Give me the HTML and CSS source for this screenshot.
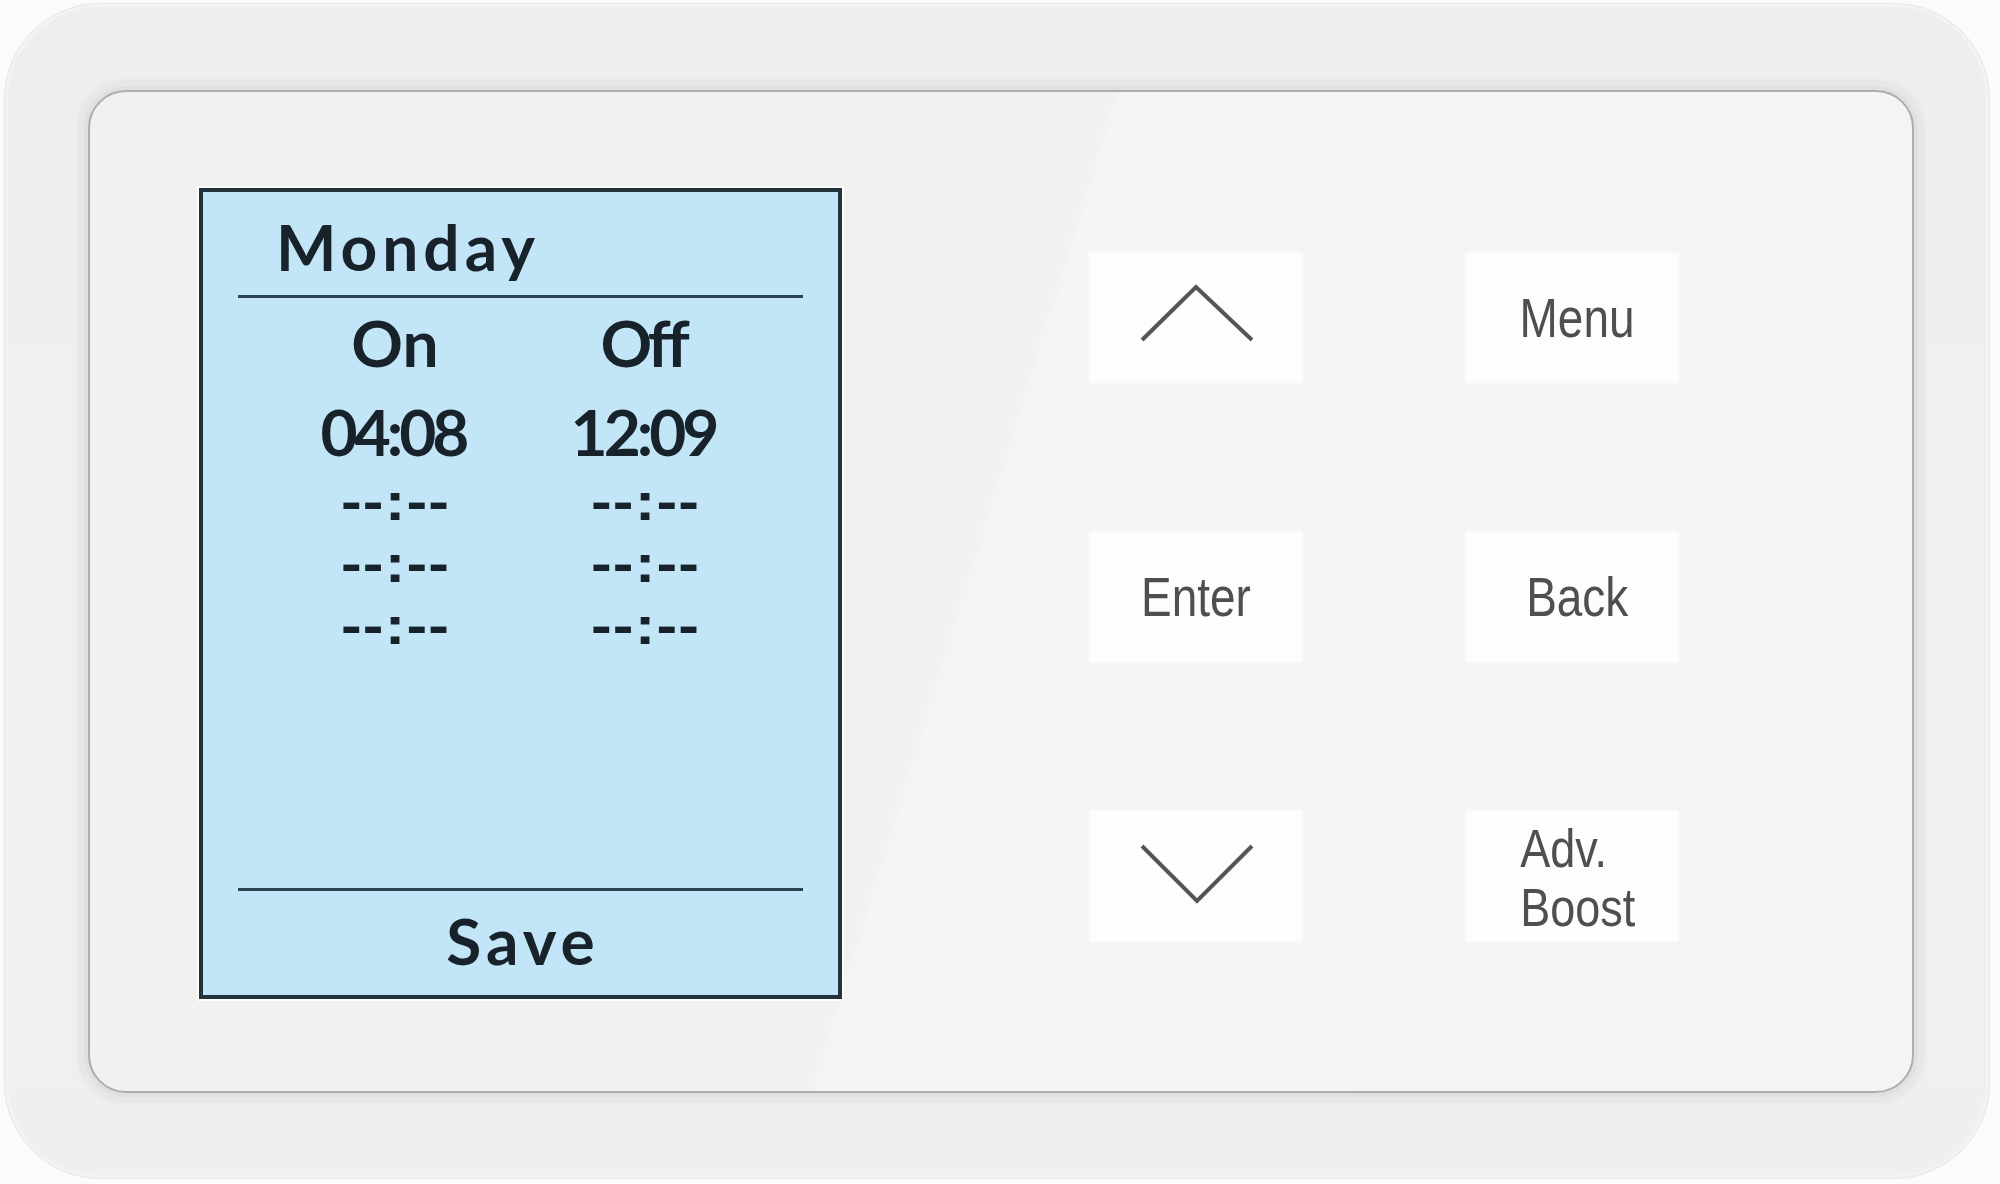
FILE: index.html
```html
<!DOCTYPE html>
<html lang="en">
<head>
<meta charset="utf-8">
<title>Thermostat controller</title>
<link rel="stylesheet" href="styles.css">
</head>
<body>
<div class="device">
  <div class="face">
    <div class="screen">
      <div class="day">Monday</div>
      <div class="rule"></div>
      <div class="schedule">
        <div class="head">On</div>
        <div class="head off">Off</div>
        <div class="time">04:08</div>
        <div class="time">12:09</div>
        <div class="blank"><span>--:--</span></div>
        <div class="blank"><span>--:--</span></div>
        <div class="blank"><span>--:--</span></div>
        <div class="blank"><span>--:--</span></div>
        <div class="blank"><span>--:--</span></div>
        <div class="blank"><span>--:--</span></div>
      </div>
      <div class="foot">
        <div class="rule"></div>
        <div class="save">Save</div>
      </div>
    </div>
    <div class="keys">
      <div class="key">
        <svg class="chev" width="213" height="130" viewBox="0 0 213 130"><polyline points="53,87 107,34 163,87"/></svg>
      </div>
      <div class="key alt"><span class="label">Menu</span></div>
      <div class="key"><span class="label">Enter</span></div>
      <div class="key alt"><span class="label">Back</span></div>
      <div class="key">
        <svg class="chev" width="213" height="130" viewBox="0 0 213 130"><polyline points="53,35 108,90 163,35"/></svg>
      </div>
      <div class="key alt boost"><span class="label two">Adv.<br>Boost</span></div>
    </div>
  </div>
</div>
</body>
</html>
```
FILE: styles.css
```css
html, body {
  margin: 0;
  padding: 0;
  background: #fbfbfb;
}

body {
  width: 2000px;
  height: 1184px;
  overflow: hidden;
}

.device {
  box-sizing: border-box;
  width: 1986px;
  height: 1176px;
  margin: 3px 0 0 4px;
  border: 1px solid #e6e6e6;
  border-radius: 96px;
  background: linear-gradient(180deg, #eeeeee 0%, #f0f0f0 50%, #efefef 100%);
  box-shadow: inset 0 0 0 3px #f3f3f3;
  padding: 86px 75px 85px 83px;
  display: flex;
}

.face {
  flex: 1;
  box-sizing: border-box;
  border: 2px solid #adadad;
  border-radius: 38px;
  background: linear-gradient(107deg, #f1f1f0 0%, #f1f1f0 48%, #f5f5f5 48.6%, #f4f4f4 100%);
  box-shadow: 0 0 0 4px #e0e0e0, 0 0 3px 11px #e7e7e7;
  padding: 96px 0 0 109px;
  display: flex;
  align-items: flex-start;
}

.screen {
  box-sizing: border-box;
  width: 643px;
  height: 811px;
  border: 4px solid #24323c;
  background: #c3e5f8;
  box-shadow: 0 0 0 2px rgba(255, 255, 255, 0.85);
  display: flex;
  flex-direction: column;
  color: #17222b;
  font-family: Lato, "DejaVu Sans", sans-serif;
  font-weight: 700;
  font-size: 64px;
}

.day {
  line-height: 80px;
  padding: 15px 0 0 73px;
  letter-spacing: 5px;
}

.rule {
  height: 3px;
  margin: 8px 35px 0 35px;
  background: #2c4555;
}

.schedule {
  display: grid;
  grid-template-columns: 200px 200px;
  column-gap: 50px;
  margin: 5px 0 0 92px;
  text-align: center;
}

.head {
  line-height: 80px;
}

.head.off {
  letter-spacing: -4px;
  text-indent: -4px;
}

.time {
  line-height: 64px;
  margin: 17px 0 6px 0;
  letter-spacing: -4px;
  text-indent: -4px;
}

.blank span {
  display: block;
  font-family: "Liberation Sans", Arial, sans-serif;
  font-weight: 700;
  font-size: 54px;
  line-height: 62px;
  letter-spacing: 1px;
  text-indent: 1px;
  text-align: center;
  transform: scaleX(1.15);
}

.foot {
  margin-top: auto;
  padding-bottom: 14px;
}

.foot .rule {
  margin-top: 0;
}

.save {
  line-height: 80px;
  margin-top: 10px;
  text-align: center;
  letter-spacing: 5px;
  text-indent: 5px;
}

.keys {
  margin: 65px 0 0 247px;
  display: grid;
  grid-template-columns: 213px 213px;
  grid-auto-rows: 130px;
  column-gap: 164px;
  row-gap: 149px;
}

.key {
  box-sizing: border-box;
  background: #fdfdfd;
  box-shadow: 0 0 4px 1px rgba(250, 250, 250, 0.9);
  display: flex;
  align-items: center;
  justify-content: center;
}

.key.alt {
  padding-left: 10px;
}

.key.boost {
  padding-top: 4px;
}

.chev {
  display: block;
}

.chev polyline {
  fill: none;
  stroke: #555555;
  stroke-width: 4;
}

.label {
  display: inline-block;
  font-family: "Liberation Sans", Arial, sans-serif;
  font-size: 56px;
  line-height: 56px;
  color: #4f4f4f;
  transform: scaleX(0.82);
}

.label.two {
  font-size: 53px;
  line-height: 59px;
  text-align: left;
  transform: scaleX(0.85);
}
```
